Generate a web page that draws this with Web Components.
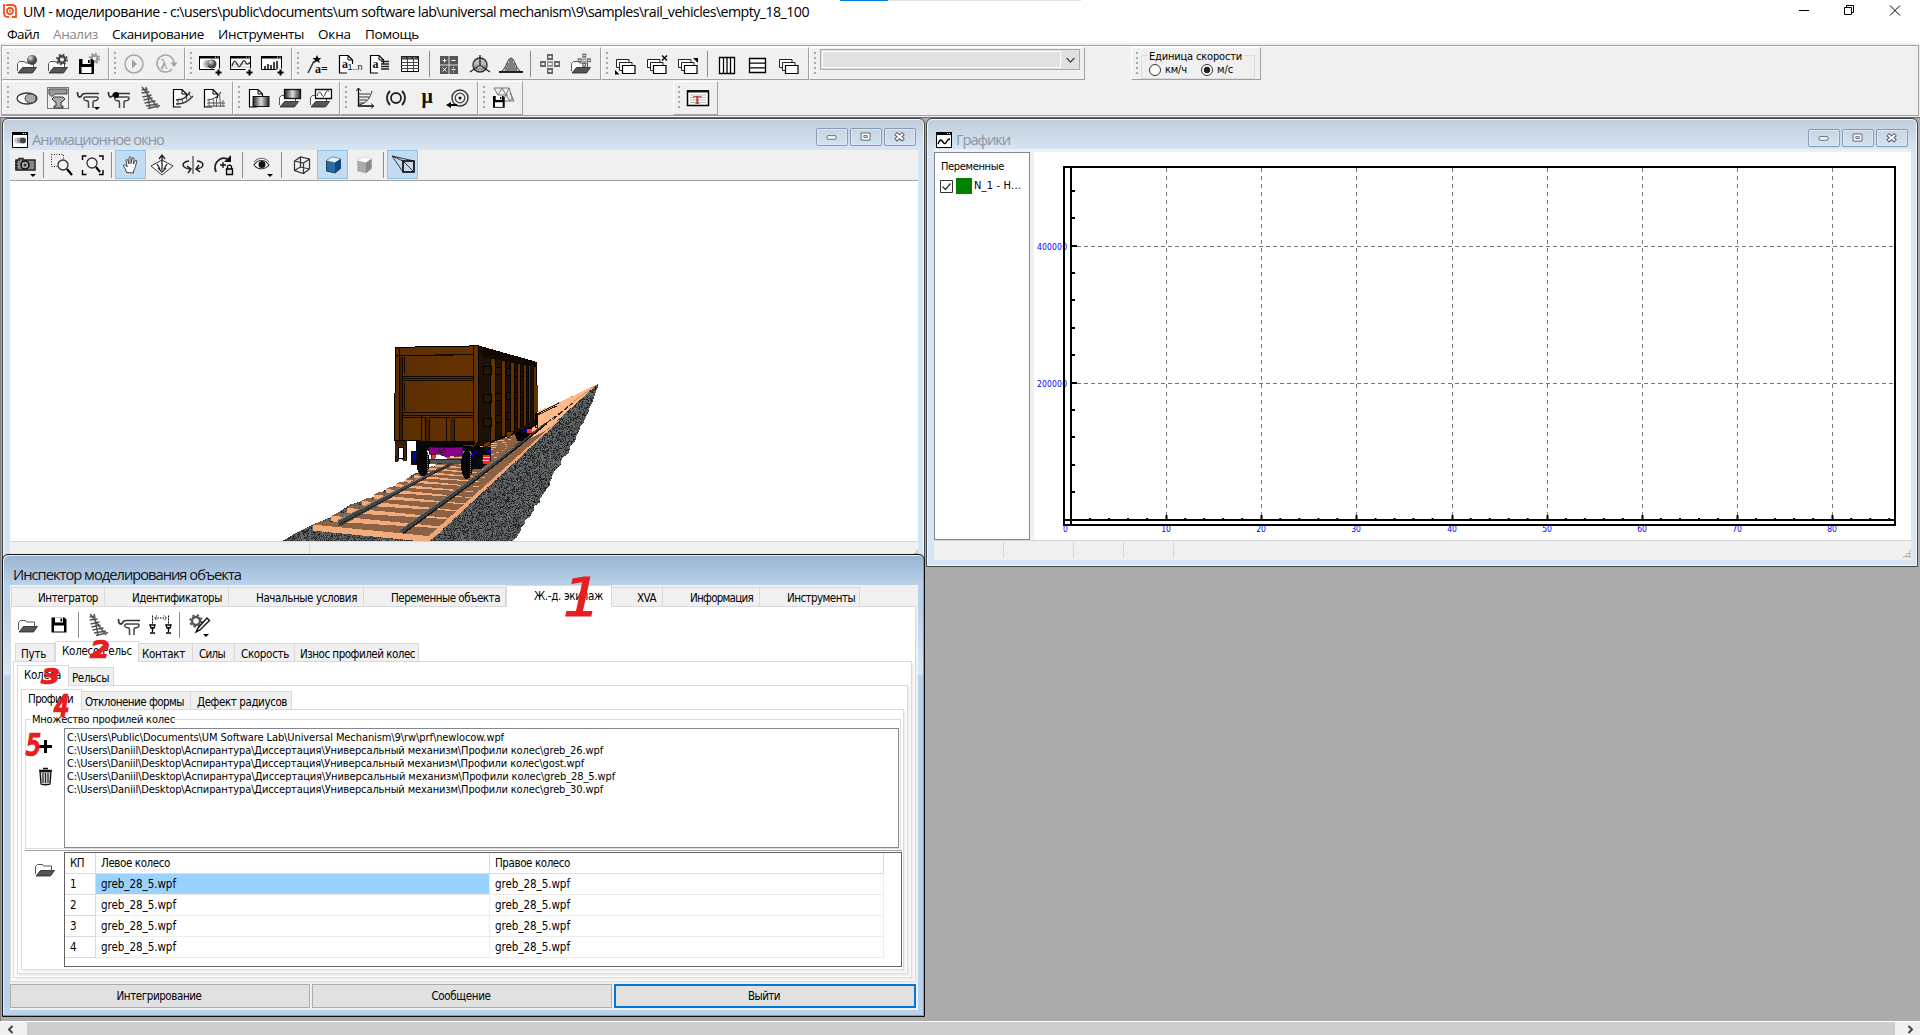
<!DOCTYPE html>
<html lang="ru">
<head>
<meta charset="utf-8">
<title>UM - моделирование</title>
<style>
html,body{margin:0;height:100%;overflow:hidden;background:#f0f0f0}
</style>
</head>
<body>
<um-app></um-app>
<script>
const define = (name, css, html, setup) => customElements.define(name, class extends HTMLElement {
  connectedCallback() {
    if (this.shadowRoot) return;
    const root = this.attachShadow({ mode: 'open' });
    root.innerHTML = `<style>*{box-sizing:border-box}${css}</style>${typeof html === 'function' ? html(this) : html}`;
    if (setup) setup(this, root);
  }
});

/* one-line label whose letter spacing is tuned to a given width */
define('fit-text', ':host{display:inline-block;white-space:pre;flex:none}span{display:inline-block;white-space:pre}', '<span><slot></slot></span>', (el, root) => {
  const w = +el.getAttribute('w'), s = root.querySelector('span'), n = el.textContent.length;
  if (!w) return;
  const cur = s.getBoundingClientRect().width;
  if (cur) s.style.letterSpacing = ((w - cur) / n) + 'px';
  el.style.width = w + 'px';
});

/* ---------- icons (26 x 26 canvas, centre 13,13) ---------- */
const K = '#111';
const folder = (dy = 0) => `<g transform="translate(0 ${dy})"><path d="M3.500 20V12.500l2-2h5l1 1.500h8v4" fill="#fff" stroke="#555"/><path d="M4 22l4.500-5.500H22.500L18.500 22z" fill="#555" stroke="#222" stroke-width=".8"/></g>`;
const gear = (x, y, r, c) => `<g transform="translate(${x} ${y})" fill="none" stroke="${c}"><circle r="${r}" stroke-width="2.400"/><circle r="${r + 1.8}" stroke-width="1.800" stroke-dasharray="${((r + 1.8) * .3927).toFixed(2)}"/></g>`;
const disk = (x, y, s) => `<g transform="translate(${x} ${y}) scale(${s})"><path d="M0 0h13l2 2v13H0z" fill="#000"/><path d="M3.500 0h8v5h-8z" fill="#fff"/><path d="M9 1h1.700v3H9z" fill="#000"/><path d="M2.500 8h10v6h-10z" fill="#fff"/></g>`;
const plus = `<path d="M18.500 21.500h6M21.500 18.500v6" stroke="#000" stroke-width="2"/>`;
const winBox = `<path d="M2.500 6h20v12.500h-20z" fill="#fff" stroke="#000"/><path d="M2 5h21v2.500H2z" fill="#000"/><path d="M18 6.200h1M20.500 6.200h1" stroke="#fff"/><path d="M17.500 17.500h8v8h-8z" fill="#f0f0f0"/>`;
const tri = (x, y) => `<path d="M${x} ${y}h6l-3 3z" fill="#000"/>`;
const page = `<path d="M12 22H4.500V4.500h8.500l4.500 4.500v4" fill="#fff" stroke="#000" stroke-width="1.200"/><path d="M13 4.500V9h4.500" fill="none" stroke="#000"/>`;
const profile = `<path d="M1.500 7c0 4 1 6 3.500 4.500 2-3.500 3-3 7-3h11" fill="none" stroke="#333" stroke-width="1.700"/><path d="M9 12h12c1.500 0 1.500 3-1 3.500-3 0-3 1-3 3V23M9 12c-2 .5-1.500 3 .5 3.500 3 0 3 1 3 3V23" fill="none" stroke="#444" stroke-width="1.500"/>`;
const casc = `<g transform="translate(-2 1)"><path d="M5.500 7.500h12.500v8H5.500z" fill="#fff" stroke="#222"/><path d="M8.500 10.500h12.500v8H8.500z" fill="#fff" stroke="#222"/><path d="M11.500 13.500h12.500v8H11.500z" fill="#fff" stroke="#000" stroke-width="1.200"/></g>`;
const track = `<path d="M4 2l16 21M8 2l4 21M3.500 5l6-1M3.500 8l8-1M4.500 12l9-2M5.500 15l9-2M6.500 18l11-2M8 21l12-2M10 23.500l12-3" stroke="#555" fill="none" stroke-width="1.400"/>`;
const cube = (a, b, c, k) => `<path d="M6.500 8.500l6-3.500 8 2v9.500l-5.500 4.500-8.500-2z" fill="${b}" stroke="${k}" stroke-width=".8"/><path d="M6.500 8.500l6-3.500 8 2-5.500 3.500z" fill="${a}"/><path d="M15 10.500l5.500-3.500v9.500L15 21z" fill="${c}"/>`;
const cell = (x, y, c = '#666') => `<path d="M${x} ${y}h6v6h-6z" fill="${c}"/><path d="M${x + 1.5} ${y + 3}h3" stroke="#fff" stroke-width="1.800"/>`;
const cross = (x, y, s) => `<g transform="translate(${x} ${y}) scale(${s})">${cell(8, 1)}${cell(1, 8)}${cell(8, 8, '#999')}${cell(15, 8)}${cell(8, 15)}</g>`;
const rail = (x) => `<path d="M${x} 13h5l-1 3h-3zM${x + 2.500} 15v5M${x} 21h5" fill="#fff" stroke="#000" stroke-width="1.300"/><path d="M${x + 2.500} 3.500v9" stroke="#000" stroke-dasharray="2 1"/>`;
const I = {
  openBall: folder() + `<circle cx="18" cy="9" r="5" fill="url(#ball)"/>`,
  openGear: folder() + gear(17, 8.500, 3.200, '#444'),
  saveGear: gear(18.500, 7.500, 3, '#999') + disk(3, 8, 1),
  play: `<circle cx="13" cy="13" r="9" fill="none" stroke="#a5a5a5" stroke-width="1.500"/><path d="M11 8.500l5 4.500-5 4.500z" fill="#a0a0a0"/>`,
  lambda: `<path d="M20 18a8.500 8.500 0 1 1 2-6" fill="none" stroke="#a5a5a5" stroke-width="1.500"/><path d="M18.500 11.500h7l-3.500 4.500z" fill="#a0a0a0"/><text x="8.500" y="18" font-family="Liberation Serif" font-weight="bold" font-size="14" fill="#a0a0a0">λ</text>`,
  winBall: winBox + `<circle cx="10" cy="13" r="4" fill="#ccc"/><circle cx="12" cy="13" r="4" fill="#aaa"/><circle cx="15" cy="13" r="4.500" fill="url(#ball)"/>` + plus,
  winWave: winBox + `<path d="M3 13h19M3 16h19" stroke="#bbb"/><path d="M4 15c2-6 3-6 5-2s3 3 5-1 3-2 4 0 3 1 4-1" fill="none" stroke="#222" stroke-width="1.300"/>` + plus,
  winBars: winBox + `<path d="M6 18v-3M9 18v-5M12 18v-4M15 18v-7M18 18v-8" stroke="#444" stroke-width="2"/>` + plus,
  wand: `<path d="M4 22l6-12" stroke="#333" stroke-width="1.500"/><path d="M13 4l1.300 3h3l-2.300 2 .8 3-2.800-1.700L10 12l1-3-2.500-2h3.200z" fill="#000"/><text x="11" y="22" font-family="Liberation Serif" font-weight="bold" font-size="12">a=</text>`,
  pageAn: page + `<text x="7" y="17" font-family="Liberation Serif" font-weight="bold" font-size="12">a</text><text x="12.500" y="18.500" font-family="Liberation Sans" font-size="9">1..n</text>`,
  pageA: page + `<text x="6.500" y="17" font-family="Liberation Serif" font-weight="bold" font-size="12">a</text><path d="M15 10.500h8M15 13h8M15 15.500h8M15 18h8" stroke="#222" stroke-width="1.300"/>`,
  table: `<path d="M4.500 5.500h17v15h-17z" fill="#fff" stroke="#000"/><path d="M4 5h18v3.500H4z" fill="#222"/><path d="M5 7h16" stroke="#999" stroke-dasharray="4 1.500"/><path d="M4 11.500h18M4 14.500h18M4 17.500h18M10.500 8v12M16.500 8v12" stroke="#444"/>`,
  calc: `<path d="M4 5h18v18H4z" fill="#555"/><path d="M13 5v18M4 14h18" stroke="#ddd"/><path d="M6.500 9.500h4M8.500 7.500v4M15.500 9.500h4M6.500 16.500l4 4M10.500 16.500l-4 4M15.500 18.500h4M17.500 16v1M17.500 20.500v1" stroke="#fff"/>`,
  disc3: `<circle cx="13" cy="14" r="7" fill="#bbb" stroke="#333" stroke-width="1.500"/><path d="M13 4v10L3 21M13 14l10 7" fill="none" stroke="#222" stroke-width="1.300"/><path d="M6 15h14M8.500 18h9" stroke="#777"/>`,
  bell: `<path d="M1 21c7 0 8-14 12-14s5 14 12 14z" fill="#ccc" stroke="#333"/><path d="M10 20v-8M12 20V8M14 20V8M16 20v-8M18 20v-4M8 20v-4" stroke="#333"/><path d="M1 21h24" stroke="#000" stroke-width="1.500"/>`,
  crossI: cross(2, 2, 1),
  openCross: folder() + cross(9, 2, .66),
  casc1: casc + `<path d="M2 19v4.500h4.500z" fill="#000"/>`,
  cascX: casc + `<path d="M18 4.500l5 5M23 4.500l-5 5" stroke="#000" stroke-width="1.300"/>`,
  casc3: casc + `<path d="M18 7h5v5z" fill="#000"/>`,
  cols: `<path d="M5.500 6.500h15v16h-15zM9.500 6.500v16M13 6.500v16M16.500 6.500v16" fill="#fff" stroke="#000" stroke-width="1.300"/>`,
  rows: `<path d="M4.500 7.500h16v14h-16zM4.500 12.200h16M4.500 16.800h16" fill="#fff" stroke="#000" stroke-width="1.300"/>`,
  casc: casc,
  ellipse: `<ellipse cx="13" cy="13.500" rx="10" ry="5.500" fill="#fff" stroke="#333" stroke-width="1.300"/><ellipse cx="16.500" cy="13.500" rx="5.500" ry="4.500" fill="#aaa" stroke="#444"/>`,
  wheel: `<rect x="2.500" y="2.500" width="21" height="21" fill="none" stroke="#000" stroke-dasharray="1 1"/><path d="M4 4h18v5H10c-2 3-4 3-6 0z" fill="#999" stroke="#444"/><path d="M9 12h9l2 2-3 3h-1v4h2v2H9v-2h2v-4h-1l-3-3z" fill="#aaa" stroke="#333"/>`,
  profA: profile + tri(18, 22),
  profB: profile + `<circle cx="9" cy="10" r="3" fill="#000"/>`,
  prof: profile,
  track,
  pageTrack: page + `<path d="M7 15c8 0 10-3 14-8M7 19c9 0 12-3 17-8" fill="none" stroke="#333" stroke-width="1.500"/><path d="M9 13.500v7M13 13l1 6M16.500 10.500l2 6M19.500 8l3 5" fill="none" stroke="#555"/>`,
  pageTrack2: page + `<path d="M7 15c6 0 10-2 14-8M7 18h18M7 21h18" fill="none" stroke="#444" stroke-width="1.200"/><path d="M9 13.500v8M13 13l1 9M16.500 11v11M19.500 8l1 14M23 15v7" fill="none" stroke="#666"/>`,
  pageGrad: page + `<rect x="8" y="11.500" width="16" height="10" fill="url(#grad)" stroke="#111"/>`,
  foldGrad: folder() + `<rect x="8.500" y="4.500" width="16" height="9" fill="url(#grad)" stroke="#111" stroke-width="1.300"/>`,
  foldWave: folder() + `<path d="M8.500 4.500h16v9h-16z" fill="#fff" stroke="#111" stroke-width="1.300"/><path d="M10 11c2-5 3-5 5-1s3-1 4-3 2-1 3 0" fill="none" stroke="#333"/>`,
  curve: `<path d="M6.500 3v18H22" fill="none" stroke="#000" stroke-width="1.300"/><path d="M4 6l2.500-3L9 6M19 18.500l3 2.500-3 2.500M7 20c8-2 11-7 13-14M6 9h12M6 12h11M6 15h9M6 18h6" fill="none" stroke="#333"/>`,
  ring: `<circle cx="13" cy="13" r="5" fill="none" stroke="#222" stroke-width="1.800"/><path d="M7 6c-4 4-4 10 0 14M19 6c4 4 4 10 0 14" fill="none" stroke="#222" stroke-width="1.800"/>`,
  mu: `<text x="7.500" y="17.500" font-family="Liberation Serif" font-weight="bold" font-size="20" fill="#111">μ</text>`,
  spiral: `<circle cx="15" cy="13" r="8" fill="none" stroke="#333" stroke-width="1.400"/><circle cx="15" cy="13" r="4.800" fill="none" stroke="#444" stroke-width="1.300"/><circle cx="15" cy="13" r="1.500"/><path d="M1 20l5-3v2h6v2H6v2z" fill="#000"/>`,
  triSave: `<path d="M4 3h15l4 12M4 3l4 7 4-7 4 7 3-7M8 10h10M12 16l4-6 4 6 2-3M14 16h10L20 8" fill="none" stroke="#777"/>` + disk(3, 11, .78),
  tWin: `<path d="M2.500 6h21v14.500h-21z" fill="#fff" stroke="#000" stroke-width="1.500"/><path d="M2 5h22v2.500H2z" fill="#111"/><path d="M5 10h16M5 12.500h16M5 15h16M5 17.500h16" stroke="#bbb"/><text x="8" y="18.500" font-family="Liberation Serif" font-weight="bold" font-size="13" fill="#a44">T</text>`,
  camera: `<path d="M3 8h3V6.500h4V8h12v10H3z" fill="#888" stroke="#222" stroke-width="1.500"/><circle cx="12" cy="13" r="4" fill="#aaa" stroke="#111" stroke-width="1.600"/><circle cx="12" cy="13" r="1.500" fill="#333"/><path d="M2 10h3M2 13h3M2 16h3" stroke="#111"/>` + tri(17, 22),
  zoomSel: `<path d="M2.500 2.500h12v12h-12z" fill="none" stroke="#222" stroke-dasharray="1 1.500"/><circle cx="14" cy="13" r="5" fill="#f4f4f4" stroke="#333" stroke-width="1.300"/><path d="M18 17l5 6" stroke="#000" stroke-width="2.200"/>`,
  zoomFit: `<path d="M2.500 8V4h4M19 4h4v4M2.500 18v4.500h4M19 22.500h4V18" fill="none" stroke="#000" stroke-width="1.400"/><circle cx="12" cy="11" r="5" fill="#f4f4f4" stroke="#333" stroke-width="1.300"/><path d="M16 15l4 5" stroke="#000" stroke-width="2.200"/>`,
  hand: `<path d="M8.500 20.500C8 17 5.500 15 5.500 13c1.500-1 3 1 3.700 2L8 8c1-1.500 2 0 2.300 2l.7 2V5.500c1-1.500 2-.5 2 1v5l1.300-5.500c1-1 2 0 1.700 1.500L15.300 12l2-3.500c1-.7 1.900.2 1.400 1.500-1.200 3-1.200 6-3.200 9v2z" fill="#fff" stroke="#333" stroke-width=".9"/>`,
  move: `<path d="M13 8L24 14 13 23 2 14z" fill="#fff" stroke="#333"/><path d="M13 4v14M10 7l3-4 3 4M8 12l3 5M18 12l-3 5M9 16l4 4 4-4" fill="none" stroke="#222" stroke-width="1.300"/>`,
  rotate: `<path d="M13 4v18" stroke="#222"/><path d="M10 17C1 16 1 10 9 9M16 17c9-1 9-7 1-8M7 14l4 3-3 4M19 13l-3 4 4 3" fill="none" stroke="#222" stroke-width="1.500"/>`,
  lock: `<path d="M5 20C1 10 11 3 18 8" fill="none" stroke="#222" stroke-width="1.800"/><path d="M20 3v7h-7z" fill="#111"/><path d="M9 13h6M12 10v6" stroke="#111" stroke-width="1.300"/><path d="M15.500 17h6v5.500h-6z" fill="#ddd" stroke="#000" stroke-width="1.300"/><path d="M16.500 17v-2c0-2.500 4-2.500 4 0v2" fill="none" stroke="#000" stroke-width="1.300"/>`,
  eye: `<path d="M5 13c4-6 11-6 15 0-4 5-11 5-15 0z" fill="#fff" stroke="#333" stroke-width="1.200"/><circle cx="13" cy="12.500" r="3.500" fill="#111"/><path d="M5 10c4-5 11-5 15 0" fill="none" stroke="#555"/>` + tri(18, 22),
  cubeW: `<path d="M5.500 9l6-4 9 2v10l-6 4.500-9-3zM5.500 9l9 2 6-4M14.500 11v10M11.500 5v10l-6 3.500M11.500 15l9 2" fill="none" stroke="#333" stroke-width="1.200"/>`,
  cubeB: cube('#e4f3fb', '#2a6ca3', '#0c4a80', '#123'),
  cubeG: cube('#fff', '#aaa', '#888', '#bbb'),
  persp: `<path d="M13 9h11v11H13zM2 4l11 5M2 4l22 5M2 4l11 16M13 9l11 11" fill="none" stroke="#333"/><path d="M13 9h11v11H13z" fill="none" stroke="#111" stroke-width="1.500"/>`,
  folder: folder(-2),
  save: disk(5.500, 5.500, 1),
  gauge: rail(2) + rail(18) + `<path d="M7 6h11M9 3.500L6.500 6 9 8.500M16 3.500L18.500 6 16 8.500" stroke="#000" stroke-dasharray="1.500 1" fill="none"/>`,
  gearPen: gear(10, 9, 4, '#555') + `<path d="M10 20l2-4L21 6l2.500 2.500L14 18z" fill="#fff" stroke="#111" stroke-width="1.400"/>` + tri(17, 22),
  plus: `<path d="M7 13.500h13M13.500 7v13" stroke="#000" stroke-width="3"/>`,
  trash: `<path d="M8 8.500h11l-1 12.500c0 1-9 1-9 0z" fill="#ccc" stroke="#111" stroke-width="1.300"/><path d="M11 10v10M13.500 10v10M16 10v10" stroke="#222" stroke-width="1.100"/><path d="M7 7.500h13M11 5.500h5" stroke="#111" stroke-width="1.600"/>`
};
define('um-icon', ':host{display:block;width:26px;height:26px;flex:none}svg{display:block;overflow:visible}', el =>
  `<svg width="26" height="26" viewBox="0 0 26 26" fill="${K}"><defs><radialGradient id="ball" cx=".35" cy=".3"><stop offset="0" stop-color="#eee"/><stop offset=".5" stop-color="#888"/><stop offset="1" stop-color="#444"/></radialGradient><linearGradient id="grad"><stop offset="0" stop-color="#222"/><stop offset=".5" stop-color="#ddd"/><stop offset="1" stop-color="#222"/></linearGradient></defs>${I[el.getAttribute('n')]}</svg>`);

define('tool-btn', ':host{display:flex;width:31px;height:100%;align-items:center;justify-content:center;flex:none}:host([on]){background:#c2dcf3;border:1px solid #90c3ec}', el => `<um-icon n="${el.getAttribute('n')}"></um-icon>`);
define('tool-sep', ':host{display:flex;justify-content:center;align-items:center;width:8px;height:100%;flex:none}i{width:1px;height:26px;background:#8a8a8a}', '<i></i>', el => { const w = el.getAttribute('w'); if (w) el.style.width = w + 'px'; });
define('tool-bar', `:host{display:flex;height:100%;flex:none;border-right:1px solid #a0a0a0;border-bottom:1px solid #a0a0a0;border-left:1px solid #fff;border-top:1px solid #fff;padding-right:4px}
  i{width:8px;flex:none;margin:3px 0 3px;background:radial-gradient(circle at 5px 2px,#aaa 1px,transparent 1.600px) 0 0/8px 5px repeat-y}`, '<i></i><slot></slot>');
const btns = s => s.split(' ').map(n => n[0] === '|' ? `<tool-sep w="${n.slice(1) || 8}"></tool-sep>` : n[0] === '*' ? `<tool-btn on n="${n.slice(1)}"></tool-btn>` : `<tool-btn n="${n}"></tool-btn>`).join('');

define('title-bar', `:host{display:flex;height:23px;background:#fff;font:14.200px/20px "Open Sans","Noto Sans",sans-serif;color:#000;align-items:flex-start}
  .logo{margin:4px 6px 0 3px;flex:none}fit-text{margin-top:2px}.accent{display:flex;margin-left:31px;flex:1}.accent b{width:48px;height:1px;background:#0078d7}.accent u{width:193px;height:1px;background:#e2e2e2}
  .ctl{margin-right:18px;flex:none}`,
  `<svg class="logo" width="14" height="14" viewBox="0 0 14 14" fill="none" stroke="#f4511e"><path d="M1 0v9q0 4 4 4h1M3 1h6q4 0 4 4v8H9" stroke-width="1.800"/><circle cx="7" cy="7" r="3" stroke-width="1.800"/><circle cx="7" cy="7" r="1" fill="#f4511e" stroke="none"/></svg>
  <fit-text w="786">UM - моделирование - c:\\users\\public\\documents\\um software lab\\universal mechanism\\9\\samples\\rail_vehicles\\empty_18_100</fit-text>
  <div class="accent"><b></b><u></u></div>
  <svg class="ctl" width="104" height="20" viewBox="0 0 104 20" fill="none" stroke="#000"><path d="M1 10.500h10M46.500 7.500h7v7h-7zM48.500 7.500v-2h7v7h-2M92 5.500l10 10M102 5.500l-10 10"/></svg>`);

define('menu-bar', `:host{display:flex;height:20px;background:#fff;padding-left:7px;gap:14px;font:13.500px/20px "Open Sans","Noto Sans",sans-serif}.d{color:#8a8a8a}fit-text{margin-top:1px}`,
  `<fit-text w="32">Файл</fit-text><fit-text w="45" class="d">Анализ</fit-text><fit-text w="92">Сканирование</fit-text><fit-text w="86">Инструменты</fit-text><fit-text w="33">Окна</fit-text><fit-text w="54">Помощь</fit-text>`);

define('speed-unit', `:host{display:block;width:117px;font:11px/12px "DejaVu Sans Condensed",sans-serif}
  .box{border:1px solid #dcdcdc;margin:7px 4px 0 1px;height:24px;width:114px;padding-left:6px}.t{background:#f0f0f0;display:block;margin-top:-5px;width:93px;padding:0 1px}
  .r{display:flex;margin-top:1px;align-items:center}.r i{width:12px;height:12px;border:1px solid #333;border-radius:50%;background:#fff;margin:0 4px 0 1px}.r i.on{background:radial-gradient(#222 3px,#fff 3.600px)}.r fit-text{margin-right:13px}`,
  `<div class="box"><fit-text class="t" w="93">Единица скорости</fit-text><div class="r"><i></i><fit-text w="22">км/ч</fit-text><i class="on"></i><fit-text w="16">м/с</fit-text></div></div>`);

define('combo-box', `:host{display:flex;width:260px;height:21px;margin:1px 0 0 2px;border:1px solid #ababab;background:#e1e1e1;flex:none}i{flex:1;border:1px solid #fff;margin:1px}svg{width:17px;margin:4px 0 0 0}`, `<i></i><svg viewBox="0 0 17 12" height="12" fill="none" stroke="#444" stroke-width="1.300"><path d="M4.500 4l4 4 4-4"/></svg>`);

define('tool-dock', `:host{display:flex;flex-direction:column;height:74px;background:#f0f0f0;padding-top:2px}
  .f{border:1px solid #a0a0a0;margin:0 1px;height:71px;display:flex;flex-direction:column;box-shadow:inset 0 1px #fff}.r{display:flex;height:34px}.r+.r{height:35px}.r{padding-top:1px}`,
  `<div class="f"><div class="r"><tool-bar>${btns('openBall openGear saveGear')}</tool-bar><tool-bar>${btns('play lambda')}</tool-bar><tool-bar>${btns('winBall winWave winBars')}</tool-bar><tool-bar>${btns('wand pageAn pageA table | calc disc3 bell | crossI openCross')}</tool-bar><tool-bar>${btns('casc1 cascX casc3 | cols rows casc')}</tool-bar>
  <tool-bar style="width:276px"><combo-box></combo-box></tool-bar><tool-bar style="margin-left:46px;width:130px"><speed-unit></speed-unit></tool-bar></div>
  <div class="r"><tool-bar>${btns('ellipse wheel profA profB track pageTrack pageTrack2')}</tool-bar><tool-bar>${btns('pageGrad foldGrad foldWave')}</tool-bar><tool-bar>${btns('curve ring mu spiral')}</tool-bar><tool-bar>${btns('triSave')}</tool-bar><tool-bar style="margin-left:150px">${btns('tWin')}</tool-bar></div></div>`);

/* ---------- child windows ---------- */
define('win-buttons', ':host{display:flex;gap:2px}svg{display:block;border:1px solid #8799b5;border-radius:2px;box-shadow:inset 0 0 0 1px #dce8f5}', `
  <svg width="32" height="18" viewBox="0 0 32 18"><rect x="10.500" y="7.500" width="10" height="4" rx="1" fill="#fff" stroke="#555a6a"/></svg>
  <svg width="32" height="18" viewBox="0 0 32 18"><path d="M10.500 4.500h10v8h-10z" fill="#fff" stroke="#555a6a"/><path d="M13.500 7.500h4v2h-4z" fill="#fff" stroke="#555a6a"/></svg>
  <svg width="32" height="18" viewBox="0 0 32 18"><path d="M11 5l9 7.500M20 5l-9 7.500" stroke="#555a6a" stroke-width="4.500"/><path d="M11.700 5.600l7.600 6.300M19.300 5.600l-7.600 6.300" stroke="#fff" stroke-width="2.300"/></svg>`);

define('mdi-window', `:host{display:flex;flex-direction:column;position:absolute;border:1px solid #444;border-radius:6px 6px 0 0;box-shadow:inset 0 0 0 1px #f2f7fc;padding:1px 6px 6px 7px;background:linear-gradient(#bfcddb,#d7e4f2 30px)}
  :host([active]){border-color:#111;box-shadow:inset -1px -1px #36b8d8,inset 1px 1px #e8f2fb;background:linear-gradient(#99b4d1,#b9d1ea 30px,#b9d1ea 50px,#dae7f5 119px,#b9d1ea 121px)}
  header{display:flex;flex:none;font:14.700px/20px "Open Sans","Noto Sans",sans-serif;color:#8c969f}:host([active]) header{color:#111;padding-left:3px}header svg{margin:12px 4px 0 2px;flex:none}header fit-text{margin-top:9px}:host([active]) fit-text{margin-top:8px}win-buttons{margin:9px 3px 0 auto}:host([ico=a]) win-buttons{margin:8px 2px 0 auto}main{flex:1;min-height:0;display:flex;flex-direction:column;background:#f0f0f0}`,
  el => `<header style="height:${el.getAttribute('th')}px">${el.getAttribute('ico') ? `<svg width="16" height="16" viewBox="0 0 16 16"><path d="M.5.500h15v15H.5z" fill="#fff" stroke="#000"/><path d="M0 0h16v3H0z"/><path d="M11 1.500h1M13 1.500h1" stroke="#fff"/>${el.getAttribute('ico') === 'a' ? '<circle cx="5" cy="8.500" r="3" fill="#ccc"/><circle cx="8" cy="8.500" r="3" fill="#999"/><circle cx="11" cy="8.500" r="3" fill="#444"/>' : '<path d="M2 12c2-5 3-5 5-2s3 1 4-1 2-2 3-2" fill="none" stroke="#000" stroke-width="1.400"/>'}</svg>` : ''}<fit-text w="${el.getAttribute('tw')}">${el.getAttribute('cap')}</fit-text>${el.hasAttribute('active') ? '' : '<win-buttons></win-buttons>'}</header><main><slot></slot></main>`);

define('status-bar', ':host{display:flex;background:#f0f0f0;border-top:1px solid #d7d7d7;flex:none;padding:1px 0}i{border-right:1px solid #d7d7d7}.g{margin-left:auto;width:9px;height:9px;align-self:flex-end;background:radial-gradient(circle,#b5b5b5 1px,transparent 1.300px) 0 0/3px 3px;clip-path:polygon(100% 0,100% 100%,0 100%)}', el => el.getAttribute('cells').split(',').map(w => `<i style="width:${w}px"></i>`).join('') + '<b class="g"></b>');

/* ---------- 3D view: gondola wagon on a ballasted track ---------- */
let seed = 7; const rnd = () => (seed = (seed * 16807) % 2147483647) / 2147483647;
function sceneSvg() {
  let d1 = '', d2 = '', d3 = '';
  for (let y = 0; y < 80; y++) for (let x = 0; x < 80; x++) {
    const r = rnd(), c = `M${x * 3} ${y * 3}h3v3h-3z`;
    if (r < .22) d1 += c; else if (r < .44) d2 += c; else if (r < .62) d3 += c;
  }
  const V = [985, 162], at = (p, t) => [V[0] + (p[0] - V[0]) * t, V[1] + (p[1] - V[1]) * t];
  const P = a => a.map(p => p.map(v => v.toFixed(1)).join(',')).join(' ');
  let right = [[985, 162]];
  for (let i = 1; i < 45; i++) { const t = i / 45; right.push([985 - 255 * Math.pow(t, 1.200) + (rnd() - .4) * 16 * Math.min(1, t * 2), 162 + 471 * t]); }
  right.push([728, 633]);
  let sl = '';
  for (let k = 45; k >= 0; k--) {
    const t = 1 / (1 + k * .068), t2 = 1 / (1 + (k + .4) * .068);
    const l = at([130, 584], t), r = at([475, 618], t), l2 = at([130, 584], t2), r2 = at([490, 606], t2), h = 18 * t;
    const re = at([505, 594], t2);
    sl += `<polygon points="${P([l, r, r2, l2])}" fill="#8d6244"/><polygon points="${P([l, r, [r[0], r[1] + h], [l[0], l[1] + h]])}" fill="#f2ab7a"/><polygon points="${P([r, re, [re[0], re[1] + h], [r[0], r[1] + h]])}" fill="#eda676"/>`;
  }
  let ribs = '';
  [[662, 676, 86, 335], [695, 706, 92, 322], [722, 732, 96, 312], [743, 751, 101, 300], [761, 768, 104, 292], [776, 782, 107, 284], [789, 799, 110, 275]].forEach(([a, b, y1, y2]) => { ribs += `<path d="M${a} ${y1}h${b - a}V${y2 - 6}L${a} ${y2}z" fill="#663300" stroke="#000" stroke-width="2.500"/>`; });
  [[641, 664, 108, 25], [677, 694, 112, 22], [708, 720, 116, 20], [733, 743, 120, 18], [752, 760, 124, 15], [769, 775, 126, 13]].forEach(([a, b, y, h]) => [0, 85, 158].forEach(o => { const yy = y + o * (1 - (a - 640) / 420); ribs += `<path d="M${a} ${yy}h${b - a}v${h}H${a}z" fill="#26160a" stroke="#000" stroke-width="3"/>`; }));
  const wheel = (x, y, rx, ry) => `<ellipse cx="${x}" cy="${y}" rx="${rx}" ry="${ry}" fill="#050505"/><path d="M${x + rx - 7} ${y - ry + 7}v${ry * 2 - 14}" stroke="#888" stroke-width="4" stroke-dasharray="3 3"/>`;
  return `<svg viewBox="-780 -447 2724 1080" width="908" height="360" shape-rendering="crispEdges">
  <defs><pattern id="gr" width="240" height="240" patternUnits="userSpaceOnUse"><path d="M0 0h240v240H0z" fill="#5c5f5f"/><path d="${d1}" fill="#1c1e20"/><path d="${d2}" fill="#3b3e40"/><path d="${d3}" fill="#6e7272"/></pattern><linearGradient id="e"><stop offset="0" stop-color="#5a2e04"/><stop offset="1" stop-color="#663300"/></linearGradient></defs>
  <polygon fill="url(#gr)" points="38,633 75,610 130,583 190,558 240,524 285,510 320,498 350,476 395,460 430,432 520,400 700,300 860,220 ${P(right)}"/>
  ${sl}
  <polygon points="800,245 870,216 983,162 830,300 780,325" fill="#fdb988"/><path d="M805 250L868 218M800 256l60-28" stroke="#222" stroke-width="3"/>
  <path d="M202 570L460 436 540 400 552 404 470 443 210 590z" fill="#444"/><path d="M205 586L540 404" stroke="#222" stroke-width="3"/><path d="M202 572L460 438" stroke="#888" stroke-width="3"/>
  <path d="M388 600L590 455 735 345 830 275 832 281 742 354 604 463 400 612z" fill="#444"/><path d="M400 610L604 461 740 354 830 281" stroke="#111" stroke-width="4" fill="none"/><path d="M390 600L590 457 735 348" stroke="#8a8a8a" stroke-width="2.500" fill="none"/><path d="M830 279L910 218M850 268l50-43" stroke="#222" stroke-width="3" stroke-dasharray="16 5"/><path d="M910 215L980 165" stroke="#b27d58" stroke-width="2"/>
  <path d="M378 336h32v54h-12v-38h-14v42h-8z" fill="#4a2503" stroke="#000" stroke-width="2.500"/><path d="M386 352h14v34h-14z" fill="#fff" stroke="#000" stroke-width="3"/>
  <path d="M736 292h50v18l-28 22h-18z" fill="#080808"/><path d="M760 290h14v16h-14z" fill="#0000c8"/><path d="M771 296h14v12h-14z" fill="#f33"/><ellipse cx="745" cy="312" rx="9" ry="21" fill="#000"/>
  <path d="M424 362h30v44h-30z" fill="#111"/><path d="M428 366h9v26h-9z" fill="#0000c8"/>
  <path d="M438 332h190v32H438z" fill="#080808"/><path d="M478 352l60 2 40-3v24l-28 6h-22l-20-8h-30z" fill="#8b008b" stroke="#222" stroke-width="2"/><path d="M508 360h10M511 366h12M520 358h7v8" stroke="#111" stroke-width="3" fill="none"/>
  <path d="M466 388h114v12H466z" fill="#555" stroke="#111" stroke-width="2"/><path d="M484 372h12v12h-12z" fill="#f33" stroke="#300" stroke-width="2"/><path d="M540 379h12v6h-12z" fill="#fb8"/>
  <path d="M604 352h60v40l-30 24h-28z" fill="#0a0a0a"/><path d="M606 410c-8-30 4-46 22-46" fill="none" stroke="#0000d0" stroke-width="5"/><path d="M640 374h20v28h-22z" fill="#f22"/><path d="M638 383h22M636 392h22" stroke="#fff" stroke-width="2"/><path d="M650 360h14v10h-14z" fill="#0000a0"/>
  ${wheel(459, 396, 20, 42)}${wheel(591, 404, 18, 43)}
  <polygon points="622,47 799,97 801,180 799,285 640,346 612,352 612,70" fill="#1e1106" stroke="#000" stroke-width="3"/>
  <path d="M625 47L800 98v14L640 82z" fill="#120a02"/>${ribs}<path d="M798 165h5v80h-5z" fill="#663300"/><path d="M795 250h7v42h-7z" fill="none" stroke="#000" stroke-width="3"/>
  <path d="M642 340l20-8v14l-22 6zM708 305h24l-12 16h-10z" fill="#6b3703" stroke="#000" stroke-width="2"/>
  <polygon points="375,53 465,50 585,49 625,46 625,335 612,352 440,332 374,332 373,200 375,190" fill="url(#e)" stroke="#000" stroke-width="3"/>
  <path d="M388 53v278M404 80v52M404 156v88M376 78L612 72M430 77h120M610 48v300M393 138h218M393 144h218M396 150h214M393 248h218M396 255h214M396 262h214M455 257v76M466 260v72M479 266v66M530 262v72M540 262v72M552 266v68M398 80v250" fill="none" stroke="#000" stroke-width="2.500"/><path d="M389 80h8v250h-8z" fill="#3a1c02"/><path d="M467 262h11v70h-11zM541 262h10v72h-10z" fill="#432104"/><path d="M374 334h38l-6 14h-28z" fill="#3a1c02"/><path d="M438 332h176v14H438z" fill="#080808"/>
  </svg>`;
}
define('rail-scene', ':host{display:block;height:360px;flex:none;background:#fff;overflow:hidden}svg{display:block}', sceneSvg);
define('view-bar', ':host{display:flex;height:31px;flex:none;background:#f0f0f0;border-bottom:1px solid #a0a0a0;padding-bottom:1px}', btns('camera |5 zoomSel zoomFit |7 *hand move rotate lock |7 eye |9 cubeW *cubeB cubeG |8 *persp'));

/* ---------- plot ---------- */
function plotSvg() {
  const X0 = 1034, Y0 = 152; let g = '';
  const yt = v => 519.500 - v * 27.400;
  for (let i = 1; i <= 8; i++) { const x = Math.round(1071 + i * 95.150) + .5; g += `<path d="M${x} 168V519" stroke="#777" stroke-dasharray="4 4"/><path d="M${x} 515v5" stroke="#000" stroke-width="2"/><text x="${x - .5}" y="531.500" text-anchor="middle">${i * 10}</text>`; }
  for (let i = 1; i < 44; i++) if (i % 5) g += `<path d="M${(1071 + i * 19.030).toFixed(1)} 518v2" stroke="#000" stroke-width="2"/>`;
  for (let i = 1; i < 13; i++) g += `<path d="M1071 ${Math.round(yt(i))}h${i % 5 ? 4 : 6}" stroke="#000" stroke-width="2"/>`;
  [[5, '200000'], [10, '400000']].forEach(([i, t]) => { const y = Math.round(yt(i)) + .5; g += `<path d="M1077 ${y}H1894" stroke="#777" stroke-dasharray="4 3"/><text x="1037" y="${y + 3.500}" textLength="30">${t}</text>`; });
  return `<svg width="877" height="388" viewBox="${X0} ${Y0} 877 388" fill="none"><g font-family="DejaVu Sans Condensed" font-size="8.500" fill="#00f">${g}<text x="1063" y="531.500">0</text></g><path d="M1064 167H1895V525H1064zM1071 167V525M1064 520H1895" stroke="#000" stroke-width="2" shape-rendering="crispEdges"/></svg>`;
}
define('plot-view', `:host{display:flex;height:391px;padding-top:3px;gap:4px;flex:none;font:11px/14px "DejaVu Sans Condensed",sans-serif}.l{width:96px;border:1px solid #828790;background:#fff;padding:7px 0 0 5px}.h{display:block;margin-left:1px}
  .r{display:flex;align-items:center;margin-top:4px;height:16px}.g{width:16px;height:16px;background:#008000;margin:0 2px 0 3px}.p{background:#fff;flex:1}svg{display:block}`,
  `<div class="l"><fit-text class="h" w="63">Переменные</fit-text><div class="r"><svg width="13" height="13" viewBox="0 0 13 13"><path d="M.5.500h12v12H.5z" fill="#fff" stroke="#333"/><path d="M2.500 6.500l3 3 5-6" fill="none" stroke="#333" stroke-width="1.200"/></svg><i class="g"></i><fit-text w="47">N_1 - Н...</fit-text></div></div><div class="p">${plotSvg()}</div>`);

/* ---------- inspector ---------- */
define('tab-item', `:host{display:flex;flex:none;height:var(--th,19px);background:#f0f0f0;border:1px solid #d9d9d9;border-left-width:0;border-bottom:0;align-items:center;font:11.500px/14px "DejaVu Sans Condensed",sans-serif}
  :host([first]){border-left-width:1px}:host([sel]){height:calc(var(--th,19px) + 3px);margin-bottom:-1px;background:#fff;border-left-width:1px;position:relative;padding-bottom:3px}fit-text{margin-top:2px}:host([sel]) fit-text{margin-top:1px}`,
  el => `<fit-text w="${el.getAttribute('tw')}"><slot></slot></fit-text>`, (el, root) => {
    el.style.width = el.getAttribute('w') + 'px'; el.style.paddingLeft = el.getAttribute('p') + 'px';
    const f = root.querySelector('fit-text'), s = f.shadowRoot.querySelector('span');
    s.style.letterSpacing = '0px'; f.style.width = 'auto';
    s.style.letterSpacing = ((+el.getAttribute('tw') - s.getBoundingClientRect().width) / el.textContent.length) + 'px';
  });
define('tab-strip', ':host{display:flex;align-items:flex-end;flex:none}', '<slot></slot>');
define('tab-page', ':host{display:flex;flex-direction:column;flex:1;min-height:0;background:#fff;border:1px solid #d9d9d9;box-shadow:2px 2px #f0f0f0}', '<slot></slot>');
define('profile-list', `:host{display:flex;height:139px;margin:0 2px 0 3px;padding-top:9px;font:11px/13px "DejaVu Sans Condensed",sans-serif;flex:none}.g{flex:1;border:1px solid #dcdcdc;display:flex;flex-direction:column}
  .t{align-self:flex-start;margin:-8px 0 0 5px;background:#fff;padding:0 1px;line-height:16px;height:16px}.b{display:flex;flex:1;min-height:0}.i{width:38px;display:flex;flex-direction:column;align-items:center;padding-top:5px;gap:4px}.l{flex:1;border:1px solid #828790;margin-right:1px;padding:2px 0 0 2px;display:flex;flex-direction:column}`,
  `<div class="g"><fit-text class="t" w="143">Множество профилей колес</fit-text><div class="b"><div class="i"><um-icon n="plus"></um-icon><um-icon n="trash"></um-icon></div><div class="l">
  ${[['C:\\Users\\Public\\Documents\\UM Software Lab\\Universal Mechanism\\9\\rw\\prf\\newlocow.wpf', 437], ...[['greb_26', 536], ['gost', 517], ['greb_28_5', 548], ['greb_30', 536]].map(([n, w]) => [`C:\\Users\\Daniil\\Desktop\\Аспирантура\\Диссертация\\Универсальный механизм\\Профили колес\\${n}.wpf`, w])].map(([t, w]) => `<fit-text w="${w}">${t}</fit-text>`).join('')}</div></div></div>`);
define('wheel-grid', `:host{display:flex;margin:1px 1px 0 3px;border-top:1px solid #a0a0a0;padding-top:1px;height:117px;flex:none;font:11.500px/14px "DejaVu Sans Condensed",sans-serif}um-icon{margin:4px 6px 0 7px}
  .g{flex:1;border:1px solid #646464;background:#fff}.r{display:flex;height:21px}.r>*{border-right:1px solid #ececec;border-bottom:1px solid #ececec;display:flex;align-items:center;padding-left:5px}.r>:nth-child(1){width:31px;border-color:#dcdcdc}.r>:nth-child(2),.r>:nth-child(3){width:394px}.r:first-child>*{border-color:#dcdcdc}.s{background:#99d1ff}`,
  `<um-icon n="folder"></um-icon><div class="g"><div class="r"><div><fit-text w="14">КП</fit-text></div><div><fit-text w="69">Левое колесо</fit-text></div><div><fit-text w="75">Правое колесо</fit-text></div></div>${[1, 2, 3, 4].map(i => `<div class="r"><div><fit-text w="7">${i}</fit-text></div><div class="${i < 2 ? 's' : ''}"><fit-text w="75">greb_28_5.wpf</fit-text></div><div><fit-text w="75">greb_28_5.wpf</fit-text></div></div>`).join('')}</div>`);
define('push-button', ':host{display:flex;align-items:center;justify-content:center;height:24px;background:#e1e1e1;border:1px solid #adadad;padding-right:2px;font:11.500px/14px "DejaVu Sans Condensed",sans-serif;flex:none}:host([def]){border:2px solid #0078d7}', '<slot></slot>');
define('ink-mark', ':host{position:absolute;color:#ea1d1f;-webkit-text-stroke:2.400px #ea1d1f;font:oblique 20px/20px "DejaVu Sans",sans-serif;transform-origin:0 0;z-index:5}', '<slot></slot>');

const tabs = (first, list) => list.map(([t, w, p, tw, sel], i) => `<tab-item ${i ? '' : 'first'} ${sel ? 'sel' : ''} w="${w}" p="${p}" tw="${tw}">${t}</tab-item>`).join('');
define('object-inspector', `:host{display:flex;flex-direction:column;flex:1;min-height:0}.s1{height:21px;padding-left:1px}.p1{margin-right:2px;flex:none;height:376px}.tb{display:flex;height:34px;padding:2px 0 0 1px;flex:none;align-items:center}
  .s2{height:20px;padding-left:4px;--th:18px}.p2{margin:0 3px 3px 2px}.s3{height:23px;padding-left:3px;--th:18px}.p3{margin:0 3px 3px 3px}.bt{display:flex;gap:2px;margin-top:2px}`,
  `<tab-strip class="s1">${tabs(1, [['Интегратор', 94, 26, 60], ['Идентификаторы', 124, 27, 90], ['Начальные условия', 135, 27, 101], ['Переменные объекта', 142, 27, 109], ['Ж.-д. экипаж', 106, 27, 69, 1], ['XVA', 51, 25, 19], ['Информация', 97, 27, 63], ['Инструменты', 100, 27, 68]])}</tab-strip>
  <tab-page class="p1"><div class="tb">${btns('folder save |9 track prof gauge |7 gearPen')}</div>
  <tab-strip class="s2">${tabs(1, [['Путь', 40, 5, 25], ['Колесо/Рельс', 84, 6, 70, 1], ['Контакт', 54, 3, 43], ['Силы', 42, 6, 26], ['Скорость', 60, 6, 48], ['Износ профилей колес', 124, 5, 115]])}</tab-strip>
  <tab-page class="p2"><tab-strip class="s3">${tabs(1, [['Колеса', 52, 6, 37, 1], ['Рельсы', 45, 3, 37]])}</tab-strip>
  <tab-page class="p3"><tab-strip class="s3">${tabs(1, [['Профили', 61, 6, 45, 1], ['Отклонение формы', 109, 3, 99], ['Дефект радиусов', 101, 6, 90]])}</tab-strip>
  <tab-page class="p3"><profile-list></profile-list><wheel-grid></wheel-grid></tab-page></tab-page></tab-page></tab-page>
  <div class="bt"><push-button style="width:300px"><fit-text w="85">Интегрирование</fit-text></push-button><push-button style="width:300px"><fit-text w="59">Сообщение</fit-text></push-button><push-button def style="width:302px"><fit-text w="32">Выйти</fit-text></push-button></div>`);

define('scroll-x', ':host{display:flex;height:14px;background:#f0f0f0;border-top:1px solid #fff;margin-left:2px}i{flex:1;background:#cdcdcd}svg{width:25px;flex:none}', `<svg height="13" viewBox="0 0 25 13" fill="none" stroke="#444" stroke-width="2"><path d="M10.500 4L7 7.500 10.500 11"/></svg><i></i><svg height="13" viewBox="0 0 25 13" fill="none" stroke="#444" stroke-width="2"><path d="M13.500 4L17 7.500 13.500 11"/></svg>`);

define('um-app', `:host{display:flex;flex-direction:column;width:1920px;height:1035px;background:#f0f0f0}
  .mdi{flex:1;position:relative;background:#ababab;border-top:1px solid #696969;border-left:1px solid #808080;overflow:hidden}
  .a{left:1px;top:0;width:923px;height:449px}.g{left:925px;top:0;width:992px;height:449px}.i{left:1px;top:436px;width:923px;height:463px}`,
  `<title-bar></title-bar><menu-bar></menu-bar><tool-dock></tool-dock>
  <div class="mdi">
    <mdi-window class="a" ico="a" cap="Анимационное окно" tw="132" th="30"><view-bar></view-bar><rail-scene></rail-scene><status-bar cells="300" style="height:18px"></status-bar></mdi-window>
    <mdi-window class="g" ico="g" cap="Графики" tw="54" th="29"><plot-view></plot-view><status-bar cells="70,70,50,50" style="height:19px"></status-bar></mdi-window>
    <mdi-window class="i" active cap="Инспектор моделирования объекта" tw="228" th="29"><object-inspector></object-inspector></mdi-window>
    <ink-mark style="left:562px;top:453px;font-size:54px;line-height:54px;-webkit-text-stroke-width:1px;transform:scaleX(1.100)">1</ink-mark>
    <ink-mark style="left:90px;top:522px;font-size:22px;transform:scaleX(1.300)">2</ink-mark>
    <ink-mark style="left:41px;top:548px;font-size:20px;transform:scaleX(1.350)">3</ink-mark>
    <ink-mark style="left:53px;top:575px;font-size:28px;line-height:28px;transform:scaleX(.85)">4</ink-mark>
    <ink-mark style="left:25px;top:613px;font-size:29px;line-height:29px;transform:scaleX(.8)">5</ink-mark>
  </div><scroll-x></scroll-x>`);
</script>
</body>
</html>
